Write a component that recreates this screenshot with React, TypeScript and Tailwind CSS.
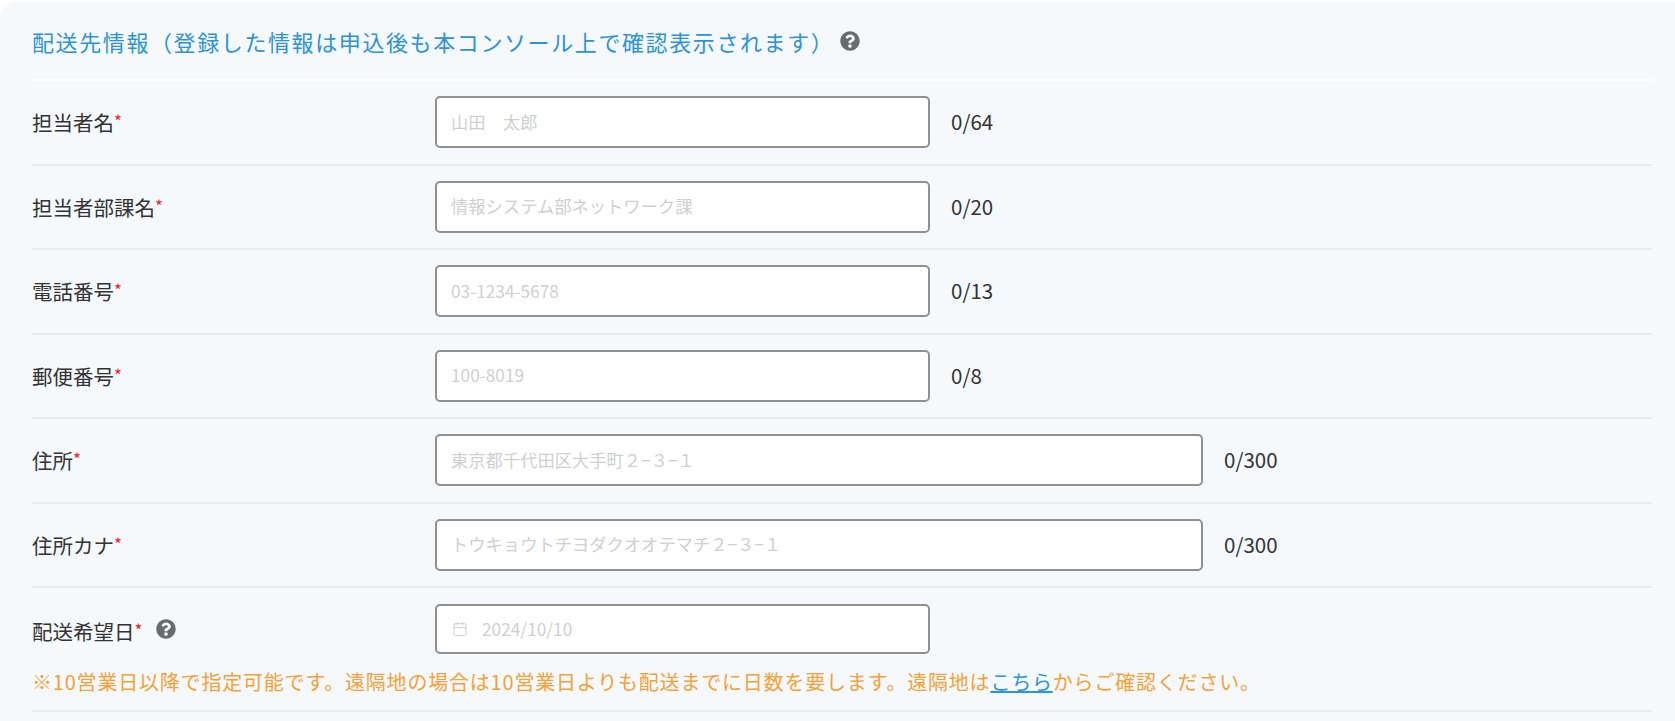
import { Calendar } from 'lucide-react'
import { FaQuestionCircle } from 'react-icons/fa'

type Field = {
  label: string
  placeholder: string
  counter: string
  wide?: boolean
}

const fields: Field[] = [
  { label: '担当者名', placeholder: '山田　太郎', counter: '0/64' },
  { label: '担当者部課名', placeholder: '情報システム部ネットワーク課', counter: '0/20' },
  { label: '電話番号', placeholder: '03-1234-5678', counter: '0/13' },
  { label: '郵便番号', placeholder: '100-8019', counter: '0/8' },
  { label: '住所', placeholder: '東京都千代田区大手町２−３−１', counter: '0/300', wide: true },
  { label: '住所カナ', placeholder: 'トウキョウトチヨダクオオテマチ２−３−１', counter: '0/300', wide: true },
]

function Label({ text }: { text: string }) {
  return (
    <span className="relative top-[2px] text-[20.5px] leading-none text-[#333]">
      {text}
      <span className="relative -top-[3px] text-[17px] text-[#f5222d]">*</span>
    </span>
  )
}

export default function App() {
  return (
    <div className="h-[721px] w-[1675px] overflow-hidden bg-white pt-[2px] font-['Noto_Sans_CJK_JP','Noto_Sans',sans-serif]">
      <section className="h-full rounded-tl-2xl bg-[#f5f9fc] pl-[32px] pr-[22px]">
        <h2 className="flex h-[79px] items-center border-b-2 border-white pt-[1px] text-[22px] tracking-[1.6px] text-[#2b93d6]">
          配送先情報（登録した情報は申込後も本コンソール上で確認表示されます）
          <FaQuestionCircle className="ml-[6px] text-[20px] text-[#6b6b6b]" />
        </h2>

        {fields.map((field) => (
          <div key={field.label} className="flex h-[84.5px] items-center border-b-2 border-[#e8ecef]">
            <div className="w-[403px]">
              <Label text={field.label} />
            </div>
            <input
              readOnly
              placeholder={field.placeholder}
              className={`h-[52px] rounded-[5px] border-2 border-[#909090] bg-white px-[14px] pb-[2px] text-[17.3px] outline-none placeholder:text-[#cfcfcf] ${field.wide ? 'w-[768px]' : 'w-[495px]'}`}
            />
            <span className="-mt-[1px] ml-[21px] text-[20.5px] text-[#333]">{field.counter}</span>
          </div>
        ))}

        <div className="h-[124px] border-b-2 border-[#e8ecef] pt-[16px]">
          <div className="flex items-center">
            <div className="flex w-[403px] items-center">
              <Label text="配送希望日" />
              <FaQuestionCircle className="ml-[14px] text-[20px] text-[#6b6b6b]" />
            </div>
            <div className="flex h-[50px] w-[495px] items-center rounded-[5px] border-2 border-[#909090] bg-white pl-[15px]">
              <Calendar className="h-[16px] w-[16px] text-[#cfcfcf]" strokeWidth={1.5} />
              <input
                readOnly
                placeholder="2024/10/10"
                className="ml-[14px] w-[300px] bg-transparent text-[17.3px] outline-none placeholder:text-[#cfcfcf]"
              />
            </div>
          </div>
          <p className="mt-[13px] text-[20px] leading-[30px] tracking-[0.8px] text-[#f7a035]">
            ※10営業日以降で指定可能です。遠隔地の場合は10営業日よりも配送までに日数を要します。遠隔地は
            <a href="#" className="text-[#2b93d6] underline">
              こちら
            </a>
            からご確認ください。
          </p>
        </div>
      </section>
    </div>
  )
}
